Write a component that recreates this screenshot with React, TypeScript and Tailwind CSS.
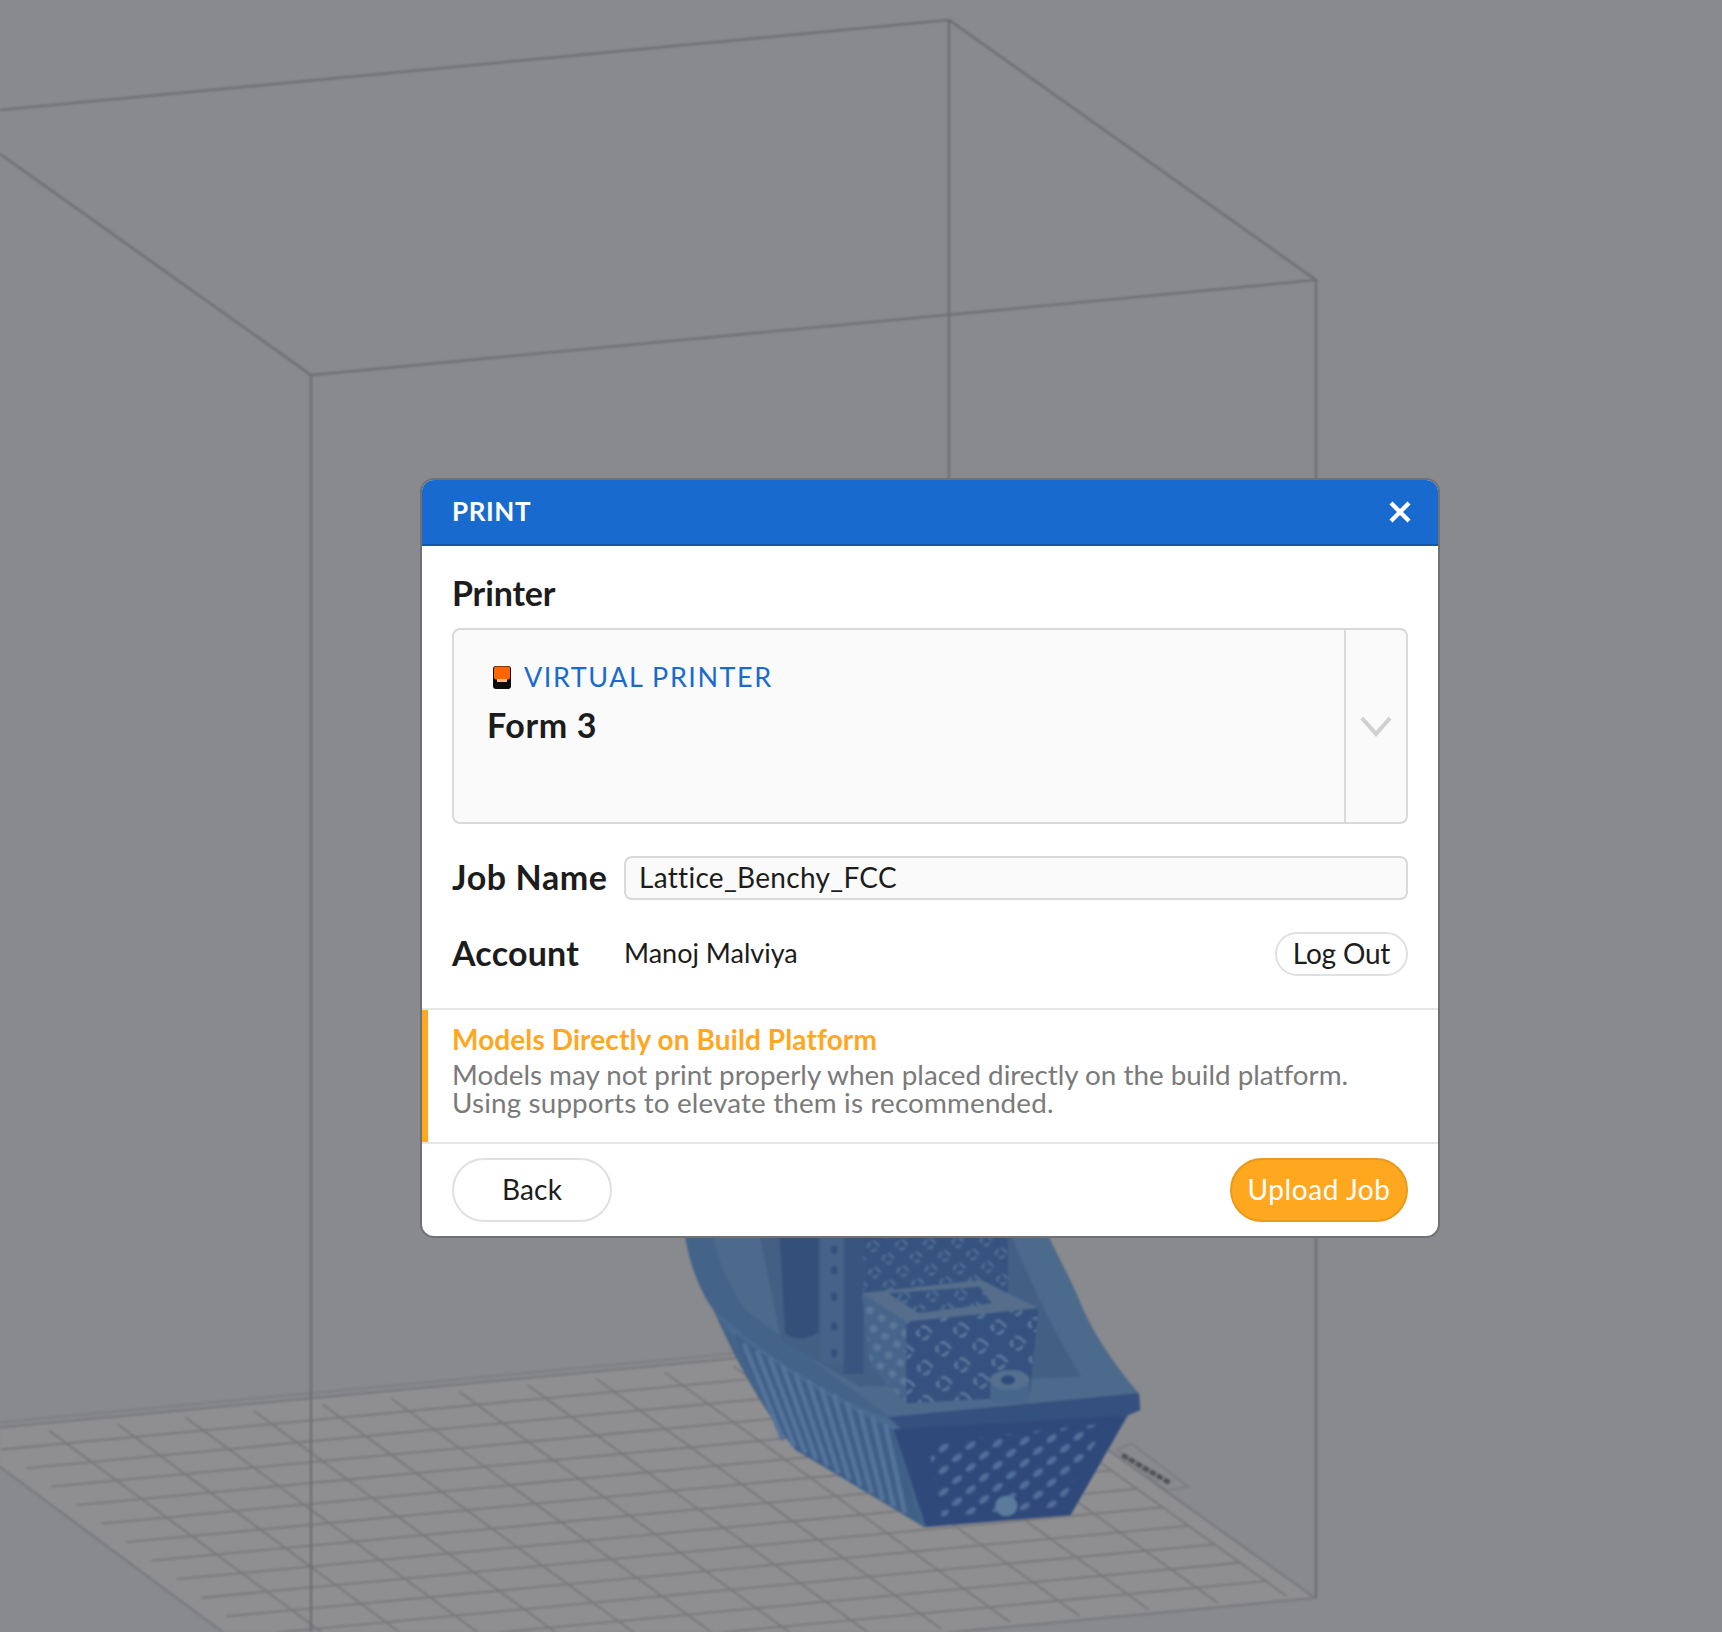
const A = [-47, 1432];
const B = [952, 1338];
const C = [1315, 1598];
const D = [305, 1693];

// point on the build plate, u along the back edge and v along the left edge
function plate(u: number, v: number) {
  const x = (1 - v) * (A[0] + (B[0] - A[0]) * u) + v * (D[0] + (C[0] - D[0]) * u);
  const y = (1 - v) * (A[1] + (B[1] - A[1]) * u) + v * (D[1] + (C[1] - D[1]) * u);
  return { x, y };
}

function Grid() {
  const us = Array.from({ length: 14 }, (_, i) => 0.087 + 0.0685 * i);
  const vs = Array.from({ length: 13 }, (_, i) => 0.075 + 0.071 * i);
  return (
    <g stroke="#78787c" strokeWidth="1.8">
      {us.map((u) => {
        const a = plate(u, 0.025);
        const b = plate(u, 0.985);
        return <line key={u} x1={a.x} y1={a.y} x2={b.x} y2={b.y} />;
      })}
      {vs.map((v) => {
        const a = plate(0.022, v);
        const b = plate(0.977, v);
        return <line key={v} x1={a.x} y1={a.y} x2={b.x} y2={b.y} />;
      })}
    </g>
  );
}

function Boat() {
  const stripes = Array.from({ length: 12 }, (_, i) => i);
  return (
    <g transform="translate(660 1230) scale(0.357 0.3333)">
      <defs>
        <pattern id="transom" width="48" height="52" patternUnits="userSpaceOnUse" patternTransform="rotate(38) skewX(-8)">
          <rect width="48" height="52" fill="#30497b" />
          <ellipse cx="24" cy="26" rx="9" ry="17" fill="#4f6e98" />
        </pattern>
        <pattern id="cube" width="72" height="76" patternUnits="userSpaceOnUse" patternTransform="rotate(42)">
          <rect width="72" height="76" fill="#34517f" />
          <rect x="20" y="22" width="32" height="32" rx="8" fill="none" stroke="#5c7a9e" strokeWidth="8" strokeDasharray="24 9" />
        </pattern>
        <pattern id="wall" width="56" height="56" patternUnits="userSpaceOnUse" patternTransform="rotate(42)">
          <rect width="56" height="56" fill="#36537f" />
          <rect x="16" y="16" width="24" height="24" rx="6" fill="none" stroke="#4f6e95" strokeWidth="7" strokeDasharray="18 8" />
        </pattern>
        <pattern id="side" width="40" height="40" patternUnits="userSpaceOnUse" patternTransform="rotate(35)">
          <rect width="40" height="40" fill="#46658b" />
          <rect x="10" y="10" width="20" height="20" rx="5" fill="#5a7898" />
        </pattern>
      </defs>

      {/* hull silhouette */}
      <path d="M70 20 C85 110 115 190 150 240 C215 400 300 560 380 660 L740 892 L1150 855 L1310 556 L1345 540 L1340 490 C1270 400 1210 310 1170 200 C1145 140 1120 90 1095 55 L1090 20 Z" fill="#436388" />
      <path d="M150 20 C165 110 195 170 240 240 L640 560 L1340 490 C1270 400 1210 310 1170 200 C1140 125 1110 70 1090 20 Z" fill="#4c6a8c" />
      <path d="M280 20 L340 330 L560 470 L1180 440 C1100 300 1040 160 985 20 Z" fill="#436084" />

      {/* columns and wheelhouse wall */}
      <path d="M335 20 H445 V305 Q395 345 350 310 Z" fill="#33507a" />
      <rect x="450" y="20" width="60" height="380" fill="#456389" />
      {[60, 120, 200, 290, 370].map((y) => (
        <ellipse key={y} cx="488" cy={y} rx="9" ry="13" fill="#32507b" />
      ))}
      <rect x="515" y="20" width="55" height="412" fill="#37557f" />
      <rect x="570" y="20" width="405" height="170" fill="url(#wall)" />

      {/* cabin box */}
      <polygon points="565,190 900,150 1060,235 690,275" fill="#566e8c" />
      <polygon points="640,190 895,170 930,220 725,250" fill="url(#wall)" />
      <polygon points="565,190 690,275 690,520 590,410" fill="url(#side)" />
      <polygon points="690,275 1060,235 1035,500 690,520" fill="url(#cube)" />

      {/* peg */}
      <rect x="925" y="452" width="110" height="66" rx="14" fill="#46668c" />
      <ellipse cx="980" cy="450" rx="56" ry="30" fill="#54708e" />
      <ellipse cx="975" cy="450" rx="20" ry="14" fill="#2f4c78" />

      {/* rim and sides */}
      <path d="M150 240 C300 380 470 500 640 565 L700 612 L650 600 C420 480 280 380 190 300 Z" fill="#4a6b90" />
      <polygon points="640,562 1342,490 1345,540 1310,556 690,612" fill="#34507e" />
      <path d="M210 310 C340 420 500 520 655 600 L725 872 L380 660 C310 570 250 420 210 310 Z" fill="#3f5f88" />
      <g stroke="#54739a" strokeWidth="14">
        {stripes.map((i) => (
          <line key={i} x1={235 + i * 36} y1={340 + i * 22} x2={345 + i * 31} y2={630 + i * 20} />
        ))}
      </g>
      <polygon points="655,598 1310,556 1150,855 745,890" fill="#30497b" />
      <polygon points="750,640 1250,580 1120,830 790,860" fill="url(#transom)" />
      <circle cx="970" cy="828" r="31" fill="#5a7b9a" />

      {/* plate label */}
      <polygon points="1280,660 1320,640 1480,770 1420,782" fill="none" stroke="#77787c" strokeWidth="4" />
      <line x1="1295" y1="675" x2="1430" y2="760" stroke="#505156" strokeWidth="14" strokeDasharray="18 5" />
    </g>
  );
}

function Scene() {
  const plateOutline = `${A[0]},${A[1]} ${B[0]},${B[1]} ${C[0]},${C[1]} ${D[0]},${D[1]}`;
  return (
    <svg className="absolute inset-0 blur-[1.2px]" width="1722" height="1632" viewBox="0 0 1722 1632">
      <polygon points={plateOutline} fill="#8f8f91" stroke="#77787c" strokeWidth="2" />
      <line x1={A[0]} y1={A[1] - 5} x2={B[0]} y2={B[1] - 5} stroke="#7d7e82" strokeWidth="2" />
      <Grid />
      <g stroke="#6c6d72" strokeWidth="2.2" fill="none">
        <polyline points="0,110 949,20 1316,280 311,375 0,154" />
        <line x1="949" y1="20" x2="949" y2="500" />
        <line x1="311" y1="375" x2="311" y2="1632" />
        <line x1="1316" y1="280" x2="1316" y2="1598" />
      </g>
      <Boat />
    </svg>
  );
}

function PrinterIcon() {
  return (
    <svg width="18" height="23" viewBox="0 0 18 23" className="shrink-0">
      <rect width="18" height="23" rx="3" fill="#0c0c0c" />
      <rect x="1" y="0.5" width="16" height="13" rx="2" fill="#ff6600" />
      <rect x="4" y="13" width="10" height="3" fill="#ffb98a" />
    </svg>
  );
}

export default function App() {
  return (
    <div
      className="relative h-[1632px] w-[1722px] overflow-hidden bg-[#898a8e] pl-[420px] pt-[478px] text-[#1c1c1c] [font-variant-ligatures:none]"
      style={{ fontFamily: 'Lato, "Noto Sans", sans-serif' }}
    >
      <Scene />
      <div className="relative h-[760px] w-[1020px] overflow-hidden rounded-[14px] border-2 border-[#707175] bg-white">
        <div className="flex h-[66px] items-center justify-between border-b-2 border-[#1558a8] bg-[#196ace] pl-[30px] pr-[27px] text-white">
          <span className="pb-[3px] text-[26px] font-bold leading-none tracking-[0.6px]">PRINT</span>
          <svg width="22" height="22" viewBox="0 0 22 22" stroke="white" strokeWidth="4.2">
            <line x1="2" y1="2" x2="20" y2="20" />
            <line x1="20" y1="2" x2="2" y2="20" />
          </svg>
        </div>

        <div className="pl-[30px] pr-[30px] pt-[27px]">
          <div className="text-[34px] font-bold leading-[40px] tracking-[-0.15px]">Printer</div>
          <div className="mt-[15px] flex h-[196px] rounded-[8px] border-2 border-[#d9d9d9] bg-[#fafafa]">
            <div className="flex-1 pl-[33px] pt-[31px]">
              <div className="flex h-[32px] items-center">
                <span className="ml-[6px]"><PrinterIcon /></span>
                <span className="ml-[13px] text-[27px] leading-[32px] tracking-[1.55px] text-[#196ace]">VIRTUAL PRINTER</span>
              </div>
              <div className="mt-[12px] text-[34px] font-bold leading-[40px] tracking-[0.6px]">Form 3</div>
            </div>
            <div className="flex w-[62px] items-center justify-center border-l-2 border-[#d9d9d9] pt-[2px]">
              <svg width="32" height="22" viewBox="0 0 32 22" fill="none" stroke="#d0d0d0" strokeWidth="4">
                <polyline points="2,2 16,18 30,2" />
              </svg>
            </div>
          </div>

          <div className="mt-[32px] flex items-center">
            <div className="w-[172px] pb-[2px] text-[34px] font-bold leading-[40px] tracking-[0.6px]">Job Name</div>
            <div className="flex h-[44px] flex-1 items-center rounded-[8px] border-2 border-[#d9d9d9] bg-[#fafafa] pb-[2px] pl-[13px] text-[28px] tracking-[0.3px]">
              Lattice_Benchy_FCC
            </div>
          </div>

          <div className="mt-[32px] flex items-center">
            <div className="w-[172px] pb-[2px] text-[34px] font-bold leading-[40px] tracking-[0.2px]">Account</div>
            <div className="flex-1 pb-[2px] text-[27px]">Manoj Malviya</div>
            <div className="flex h-[44px] w-[133px] items-center justify-center rounded-full border-2 border-[#e0e0e0] pb-[2px] text-[28px] tracking-[-0.2px]">
              Log Out
            </div>
          </div>
        </div>

        <div className="mt-[32px] h-[136px] border-y-2 border-y-[#e6e6e6]">
          <div className="h-[132px] border-l-[6px] border-[#ffa81f] pl-[24px] pt-[14px]">
            <div className="text-[28px] font-bold leading-[30px] tracking-[0.1px] text-[#ffa81f]">Models Directly on Build Platform</div>
            <div className="mt-[7px] text-[27.8px] leading-[28px] text-[#7a7a7a]">
              Models may not print properly when placed directly on the build platform.
              <br />
              <span className="tracking-[0.16px]">Using supports to elevate them is recommended.</span>
            </div>
          </div>
        </div>

        <div className="flex justify-between pl-[30px] pr-[30px] pt-[14px]">
          <div className="flex h-[64px] w-[160px] items-center justify-center rounded-full border-2 border-[#e0e0e0] pb-[2px] text-[28px] tracking-[0.2px]">
            Back
          </div>
          <div className="flex h-[64px] w-[178px] items-center justify-center rounded-full border-2 border-[#e89a1a] bg-[#ffa81f] pb-[2px] text-[28px] tracking-[0.6px] text-white">
            Upload Job
          </div>
        </div>
      </div>
    </div>
  );
}
